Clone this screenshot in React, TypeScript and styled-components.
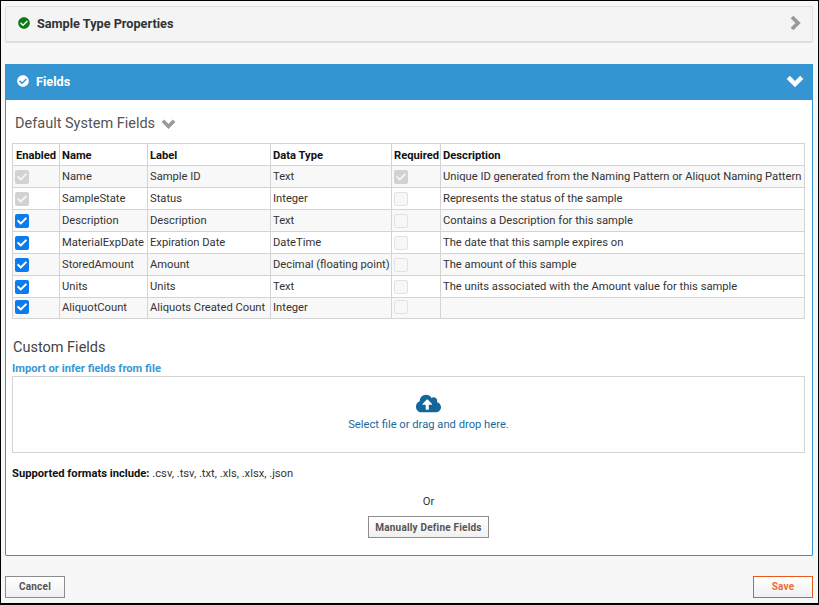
import { createGlobalStyle } from 'styled-components';
import styled from 'styled-components';
import { FaCheck, FaCheckCircle, FaCloudUploadAlt } from 'react-icons/fa';

const GlobalStyle = createGlobalStyle`
  html, body {
    margin: 0;
    padding: 0;
    height: 100%;
    background: #f7f7f7;
  }
  * {
    box-sizing: border-box;
  }
  body {
    font-family: Roboto, 'Liberation Sans', sans-serif;
    color: #333;
  }
`;

const Page = styled.div`
  width: 819px;
  height: 605px;
  border: 1px solid #000;
  border-bottom-width: 2px;
  padding: 5px 5px 0 4px;
  background: #f7f7f7;
  overflow: hidden;
`;

const CollapsedPanel = styled.div`
  height: 37px;
  display: flex;
  align-items: center;
  justify-content: space-between;
  padding: 0 11px 2px 12px;
  background: #f4f4f4;
  border: 1px solid #e0e0e0;
  border-bottom: 2px solid #dedede;
  border-radius: 2px;
`;

const PanelTitle = styled.div<{ $light?: boolean }>`
  display: flex;
  align-items: center;
  gap: 7px;
  font-size: 12.7px;
  font-weight: 700;
  color: ${(p) => (p.$light ? '#fff' : '#333')};
`;

const FieldsPanel = styled.div`
  margin-top: 21px;
  height: 492px;
  background: #fff;
  border: 1px solid #3495d2;
  border-top: 0;
  border-radius: 2px;
`;

const FieldsHeader = styled.div`
  height: 36px;
  margin: 0 -1px;
  display: flex;
  align-items: center;
  justify-content: space-between;
  padding: 0 9px 2px 12px;
  background: #3495d2;
`;

const FieldsBody = styled.div`
  padding: 13px 7px 0 6px;
`;

const SectionTitle = styled.div`
  display: flex;
  align-items: center;
  gap: 6px;
  height: 20px;
  padding: 1px 0 0 3px;
  font-size: 14.5px;
  color: #555;
`;

const Table = styled.table`
  margin-top: 10px;
  width: 793px;
  border-collapse: collapse;
  table-layout: fixed;
  font-size: 11.2px;
  color: #333;
`;

const Th = styled.th<{ $w?: number }>`
  width: ${(p) => (p.$w ? `${p.$w}px` : 'auto')};
  height: 22px;
  padding: 1px 2px 0;
  border: 1px solid #d4d4d4;
  background: #fff;
  color: #111;
  font-weight: 700;
  text-align: left;
  white-space: nowrap;
  overflow: hidden;
  &:first-child {
    padding-left: 3px;
  }
`;

const Tr = styled.tr`
  &:nth-child(odd) td {
    background: #f8f8f8;
  }
  &:last-child td {
    height: 21px;
    padding-bottom: 2px;
  }
`;

const Td = styled.td`
  height: 22px;
  padding: 0 2px;
  border: 1px solid #d4d4d4;
  white-space: nowrap;
  overflow: hidden;
`;

const Check = styled.span<{ $state: 'on' | 'locked' | 'off' }>`
  display: flex;
  align-items: center;
  justify-content: center;
  width: 14px;
  height: 14px;
  border-radius: 2px;
  font-size: 10px;
  color: ${(p) => (p.$state === 'on' ? '#fff' : '#f4f4f4')};
  background: ${(p) => (p.$state === 'on' ? '#0b7cf0' : p.$state === 'locked' ? '#d2d2d2' : '#f7f7f7')};
  border: ${(p) => (p.$state === 'off' ? '1px solid #e2e2e2' : 'none')};
`;

const CustomTitle = styled.div`
  margin-top: 20px;
  height: 18px;
  padding-left: 1px;
  line-height: 18px;
  font-size: 14.5px;
  color: #444;
`;

const ImportLink = styled.div`
  margin-top: 4px;
  height: 15px;
  font-size: 11.2px;
  line-height: 15px;
  font-weight: 700;
  color: #3b97d3;
`;

const DropZone = styled.div`
  margin-top: 0;
  width: 793px;
  height: 77px;
  display: flex;
  flex-direction: column;
  align-items: center;
  padding: 14px 0 0 40px;
  border: 1px solid #d4d4d4;
  background: #fff;
  color: #1a6a9e;
  font-size: 11.2px;
`;

const DropText = styled.div`
  margin-top: 1px;
  line-height: 15px;
`;

const Formats = styled.div`
  margin-top: 13px;
  font-size: 11.2px;
  line-height: 15px;
  color: #333;
  & b {
    color: #111;
  }
`;

const OrBlock = styled.div`
  margin-top: 13px;
  width: 793px;
  padding-left: 40px;
  display: flex;
  flex-direction: column;
  align-items: center;
  gap: 7px;
  font-size: 11.2px;
  line-height: 15px;
`;

const Button = styled.button<{ $primary?: boolean }>`
  height: 22px;
  width: 60px;
  padding: 0 0 1px;
  font-family: inherit;
  font-size: 10px;
  font-weight: 700;
  letter-spacing: 0.2px;
  color: ${(p) => (p.$primary ? '#ef6c3a' : '#555')};
  background: linear-gradient(#ffffff, #f0f0f0);
  border: 1px solid ${(p) => (p.$primary ? '#e9591c' : '#8c8c8c')};
`;

const WideButton = styled(Button)`
  width: 121px;
  padding: 0;
`;

const Footer = styled.div`
  margin-top: 20px;
  display: flex;
  justify-content: space-between;
`;

const ChevronDown = ({ w, color }: { w: number; color: string }) => (
  <svg width={w} height={w * 0.75} viewBox='0 0 16 12'>
    <polyline points='2,3 8,9 14,3' fill='none' stroke={color} strokeWidth='3.8' />
  </svg>
);

const ChevronRight = ({ color }: { color: string }) => (
  <svg width='12' height='16' viewBox='0 0 12 16'>
    <polyline points='3,2 9,8 3,14' fill='none' stroke={color} strokeWidth='3.8' />
  </svg>
);

const rows = [
  ['locked', 'Name', 'Sample ID', 'Text', 'locked', 'Unique ID generated from the Naming Pattern or Aliquot Naming Pattern'],
  ['locked', 'SampleState', 'Status', 'Integer', 'off', 'Represents the status of the sample'],
  ['on', 'Description', 'Description', 'Text', 'off', 'Contains a Description for this sample'],
  ['on', 'MaterialExpDate', 'Expiration Date', 'DateTime', 'off', 'The date that this sample expires on'],
  ['on', 'StoredAmount', 'Amount', 'Decimal (floating point)', 'off', 'The amount of this sample'],
  ['on', 'Units', 'Units', 'Text', 'off', 'The units associated with the Amount value for this sample'],
  ['on', 'AliquotCount', 'Aliquots Created Count', 'Integer', 'off', ''],
] as const;

const Box = ({ state }: { state: 'on' | 'locked' | 'off' }) => (
  <Check $state={state}>{state !== 'off' && <FaCheck />}</Check>
);

const App = () => {
  return (
    <Page>
      <GlobalStyle />
      <CollapsedPanel>
        <PanelTitle>
          <FaCheckCircle size={12} color='#0a7a14' />
          Sample Type Properties
        </PanelTitle>
        <ChevronRight color='#9a9a9a' />
      </CollapsedPanel>
      <FieldsPanel>
        <FieldsHeader>
          <PanelTitle $light>
            <FaCheckCircle size={12} color='#fff' />
            Fields
          </PanelTitle>
          <ChevronDown w={18} color='#fff' />
        </FieldsHeader>
        <FieldsBody>
          <SectionTitle>
            Default System Fields
            <ChevronDown w={15} color='#999' />
          </SectionTitle>
          <Table>
            <thead>
              <tr>
                <Th $w={47}>Enabled</Th>
                <Th $w={88}>Name</Th>
                <Th $w={123}>Label</Th>
                <Th $w={121}>Data Type</Th>
                <Th $w={49}>Required</Th>
                <Th>Description</Th>
              </tr>
            </thead>
            <tbody>
              {rows.map((r) => (
                <Tr key={r[1]}>
                  <Td><Box state={r[0]} /></Td>
                  <Td>{r[1]}</Td>
                  <Td>{r[2]}</Td>
                  <Td>{r[3]}</Td>
                  <Td><Box state={r[4]} /></Td>
                  <Td>{r[5]}</Td>
                </Tr>
              ))}
            </tbody>
          </Table>
          <CustomTitle>Custom Fields</CustomTitle>
          <ImportLink>Import or infer fields from file</ImportLink>
          <DropZone>
            <FaCloudUploadAlt size={25} color='#126699' />
            <DropText>Select file or drag and drop here.</DropText>
          </DropZone>
          <Formats>
            <b>Supported formats include:</b> .csv, .tsv, .txt, .xls, .xlsx, .json
          </Formats>
          <OrBlock>
            Or
            <WideButton>Manually Define Fields</WideButton>
          </OrBlock>
        </FieldsBody>
      </FieldsPanel>
      <Footer>
        <Button>Cancel</Button>
        <Button $primary>Save</Button>
      </Footer>
    </Page>
  );
};

export default App;
